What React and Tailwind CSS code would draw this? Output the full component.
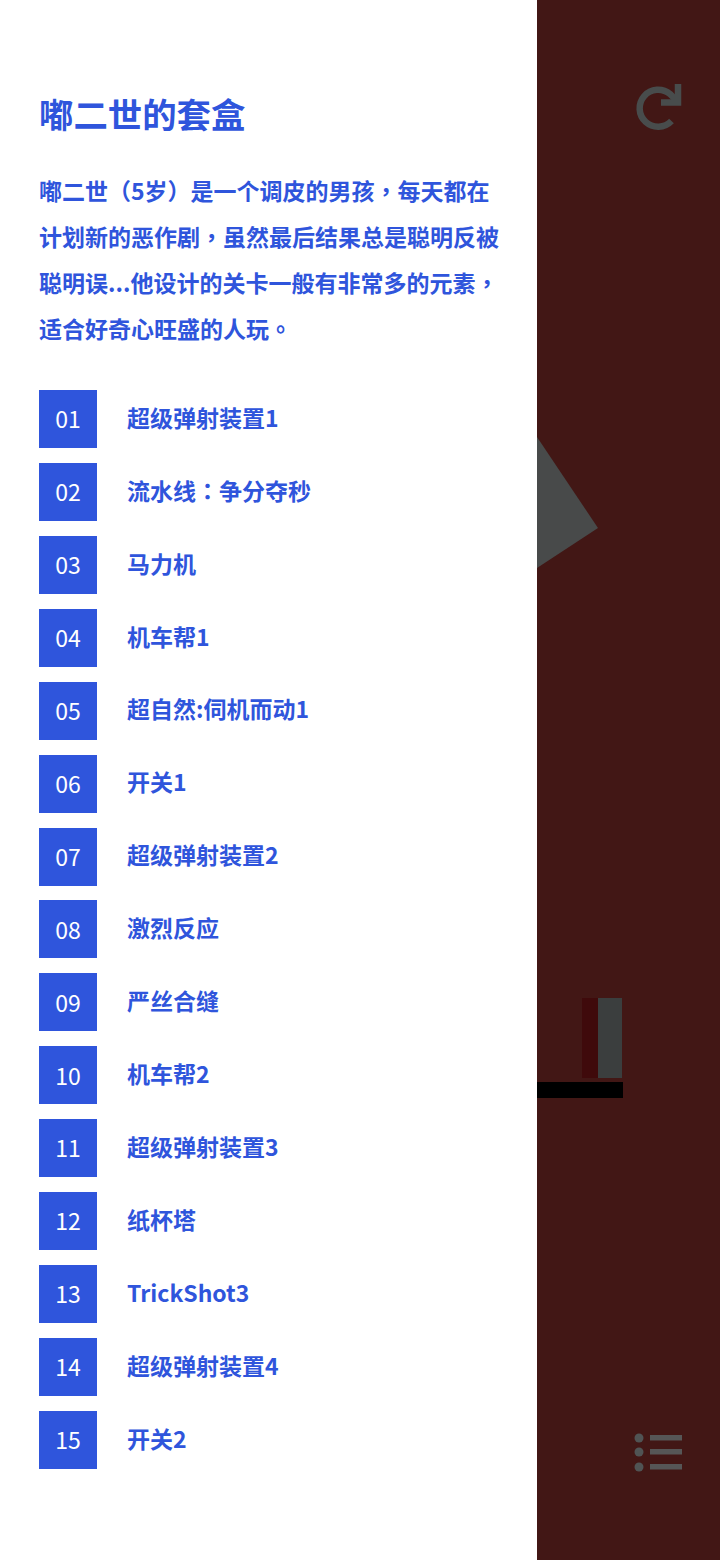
import React from "react";

const levels = [
  "超级弹射装置1",
  "流水线：争分夺秒",
  "马力机",
  "机车帮1",
  "超自然:伺机而动1",
  "开关1",
  "超级弹射装置2",
  "激烈反应",
  "严丝合缝",
  "机车帮2",
  "超级弹射装置3",
  "纸杯塔",
  "TrickShot3",
  "超级弹射装置4",
  "开关2",
];

const pad = (n) => String(n).padStart(2, "0");

// the reference sets full-width punctuation centred in its cell
const Punct = ({ children }) => (
  <span className="font-['Noto_Sans_CJK_TC',sans-serif]">{children}</span>
);

const App = () => {
  return (
    <div className="flex w-[720px] h-[1560px] overflow-hidden font-['Noto_Sans_CJK_SC',sans-serif]">
      <div className="w-[537px] shrink-0 bg-white pl-[39px] pr-[30px] pt-[90px]">
        <h1 className="text-[34.4px] leading-[46px] font-bold text-[#2f55dc]">嘟二世的套盒</h1>
        <p className="mt-[31px] text-[23px] leading-[46px] font-bold text-[#2f55dc]">
          嘟二世（5岁）是一个调皮的男孩<Punct>，</Punct>每天都在计划新的恶作剧<Punct>，</Punct>虽然最后结果总是聪明反被聪明误...他设计的关卡一般有非常多的元素<Punct>，</Punct>适合好奇心旺盛的人玩<Punct>。</Punct>
        </p>
        <div className="mt-[39px] flex flex-col gap-[14.93px]">
          {levels.map((name, i) => (
            <div key={name} className="flex items-center gap-[30px]">
              <div className="w-[58px] h-[58px] pb-[1px] bg-[#2f55dc] flex items-center justify-center text-white text-[23px]">
                {pad(i + 1)}
              </div>
              <span className="text-[23px] font-bold text-[#2f55dc] -mt-[4px]">
                {name.includes("：") ? (
                  <>
                    流水线<Punct>：</Punct>争分夺秒
                  </>
                ) : (
                  name
                )}
              </span>
            </div>
          ))}
        </div>
      </div>
      <div className="relative flex-1 bg-[#421715]">
        <svg className="absolute left-0 top-[437px]" width="62" height="132" viewBox="0 0 62 132">
          <path d="M0 0 L61 91 L0 131 Z" fill="#484a4a" />
        </svg>
        <div className="absolute left-[45px] top-[998px] w-[16px] h-[80px] bg-[#3f0a0b]" />
        <div className="absolute left-[61px] top-[998px] w-[24px] h-[80px] bg-[#3b3e3e]" />
        <div className="absolute left-0 top-[1082px] w-[86px] h-[16px] bg-black" />
        <svg className="absolute left-[95px] top-[80px]" width="56" height="56" viewBox="0 0 56 56" fill="none">
          <path d="M39.5 41 A18.5 18.5 0 1 1 38 14 L46 22" stroke="#484c4c" strokeWidth="6.5" />
          <path d="M46 4 V22.5 H29" stroke="#484c4c" strokeWidth="6.5" />
        </svg>
        <svg className="absolute left-[95px] top-[1428px]" width="54" height="46" viewBox="0 0 54 46" fill="#565656">
          <circle cx="7" cy="10" r="4.5" fill="#505454" />
          <circle cx="7" cy="24" r="4.5" fill="#505454" />
          <circle cx="7" cy="39" r="4.5" fill="#505454" />
          <rect x="18" y="7" width="32" height="5.5" />
          <rect x="18" y="21" width="32" height="5.5" />
          <rect x="18" y="36" width="32" height="5.5" />
        </svg>
      </div>
    </div>
  );
};

export default App;
